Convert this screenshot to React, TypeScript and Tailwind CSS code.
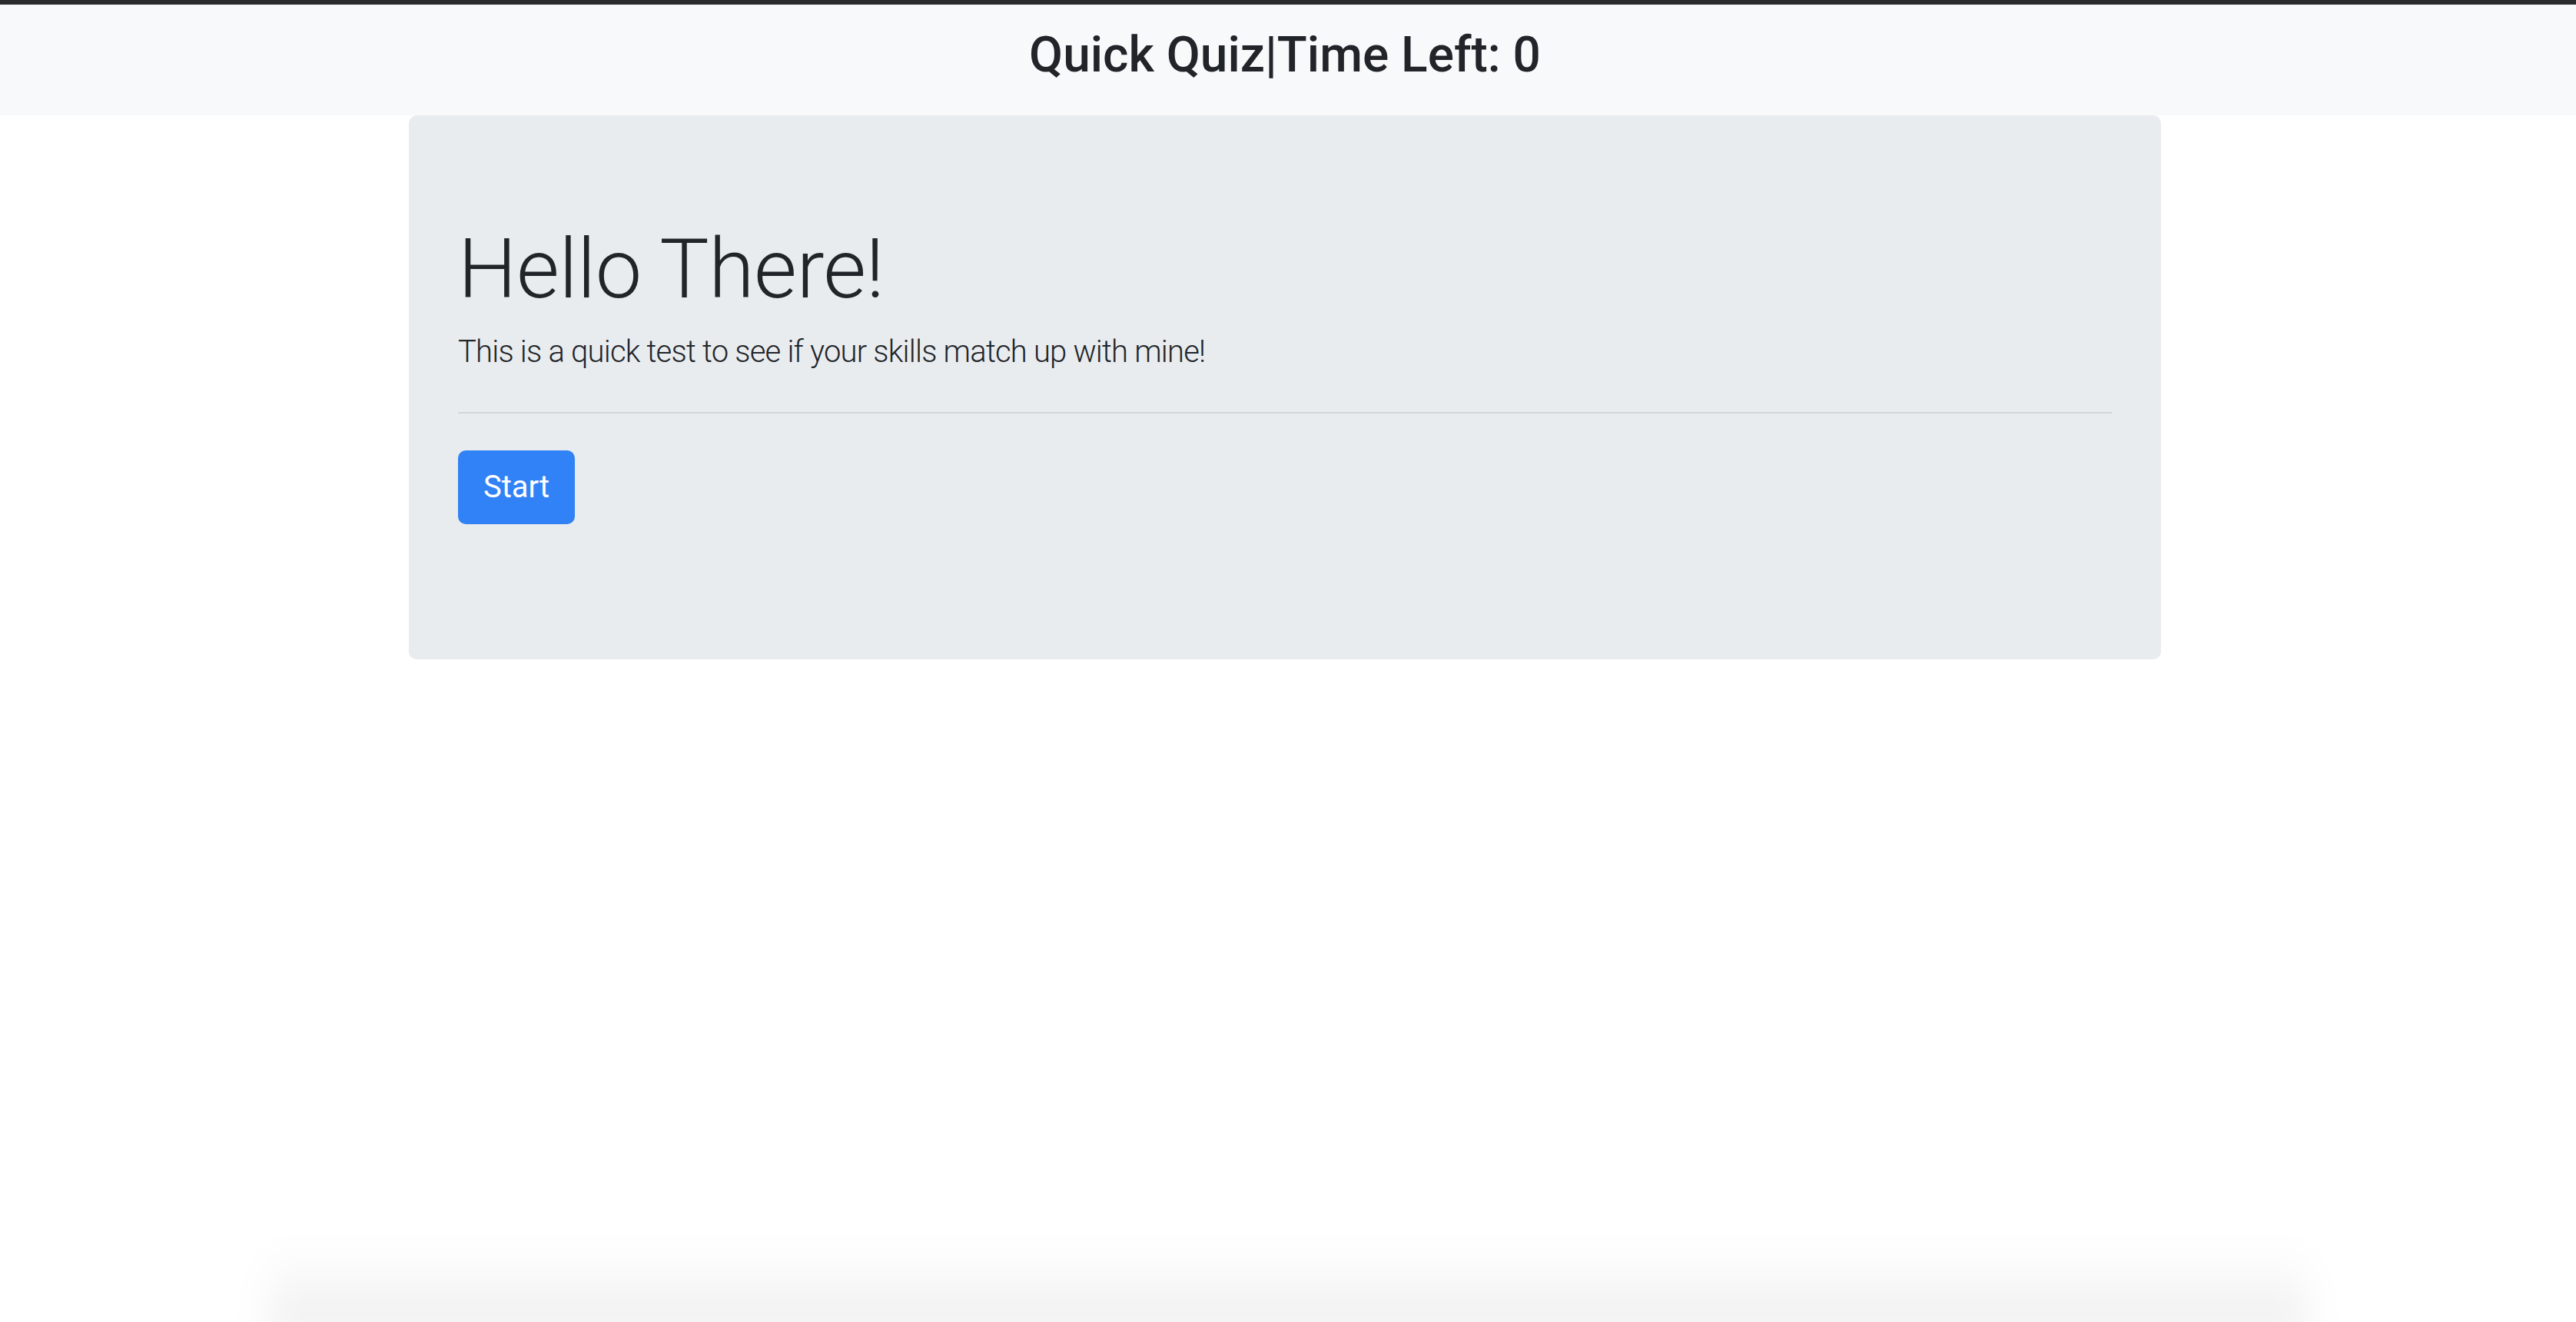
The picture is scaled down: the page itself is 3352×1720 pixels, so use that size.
export default function App() {
  return (
    <div className="relative min-h-screen bg-white font-['Roboto','Liberation_Sans',sans-serif] text-[#212529]">
      {/* window top edge */}
      <div className="h-[6px] bg-[#2b2b2b]" />

      {/* title bar */}
      <header className="flex h-[144px] items-center justify-center bg-[#f8f9fa] pr-2 pb-[14px]">
        <h2 className="text-[64px] font-medium leading-[77px]">Quick Quiz|Time Left: 0</h2>
      </header>

      {/* jumbotron */}
      <main className="pr-2">
        <section className="mx-auto w-[2280px] rounded-[10px] bg-[#e9ecef] px-16 pt-[135px] pb-[176px]">
          <h1 className="text-[108px] font-light leading-[130px] tracking-[-0.005em]">Hello There!</h1>
          <p className="mt-[13px] text-[40px] font-light leading-[60px] tracking-[-0.02em]">
            This is a quick test to see if your skills match up with mine!
          </p>
          <hr className="mt-12 h-[2px] border-0 bg-[#d3d5d9]" />
          <button
            type="button"
            className="mt-12 flex h-[96px] w-[152px] items-center justify-center rounded-[10px] bg-[#3182f6] text-[40px] font-normal text-white"
          >
            Start
          </button>
        </section>
      </main>

      {/* soft shadow from something just below the viewport */}
      <div className="pointer-events-none fixed bottom-[-20px] left-[350px] right-[350px] h-[120px] bg-linear-to-t from-black/[0.07] to-transparent blur-xl" />
    </div>
  )
}
